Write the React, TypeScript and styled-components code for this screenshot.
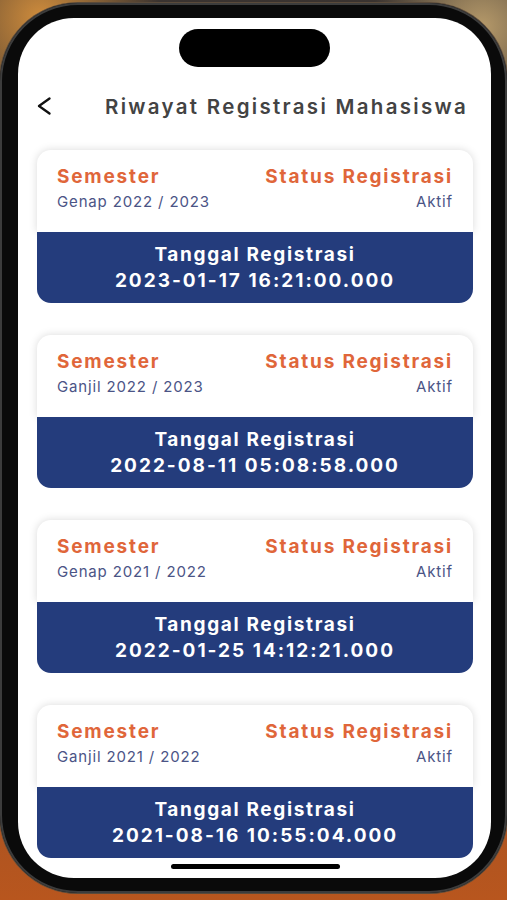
import React from "react";
import styled, { createGlobalStyle } from "styled-components";

const GlobalStyle = createGlobalStyle`
  html, body {
    margin: 0;
    padding: 0;
  }
  body {
    font-family: "Inter", "Noto Sans", sans-serif;
    background: #8a5a30;
  }
`;

interface IRegistration {
  semester: string;
  status: string;
  date: string;
}

const registrations: IRegistration[] = [
  { semester: "Genap 2022 / 2023", status: "Aktif", date: "2023-01-17 16:21:00.000" },
  { semester: "Ganjil 2022 / 2023", status: "Aktif", date: "2022-08-11 05:08:58.000" },
  { semester: "Genap 2021 / 2022", status: "Aktif", date: "2022-01-25 14:12:21.000" },
  { semester: "Ganjil 2021 / 2022", status: "Aktif", date: "2021-08-16 10:55:04.000" },
];

const Backdrop = styled.div`
  width: 507px;
  height: 900px;
  overflow: hidden;
  padding-top: 3px;
  box-sizing: border-box;
  background:
    radial-gradient(circle at 8% 2%, #cf8c3c 0, rgba(207, 140, 60, 0) 120px),
    radial-gradient(circle at 95% 3%, #b69a6a 0, rgba(182, 154, 106, 0) 110px),
    linear-gradient(to bottom, #3a3330 0%, #6b4a2e 40%, #9a5026 75%, #b8561e 100%);
  display: flex;
  justify-content: center;
`;

const Phone = styled.div`
  width: 507px;
  height: 890px;
  box-sizing: border-box;
  padding: 15px 16px 15px 18px;
  border-radius: 78px;
  background: #0a0a0a;
  box-shadow: inset 0 0 0 2px #3c3c3c, 0 0 0 1px #5a4a3a;
  display: flex;
`;

const Screen = styled.div`
  flex: 1;
  position: relative;
  overflow: hidden;
  background: #ffffff;
  border-radius: 56px;
  display: flex;
  flex-direction: column;
`;

const Island = styled.div`
  align-self: center;
  width: 151px;
  height: 38px;
  margin-top: 11px;
  border-radius: 19px;
  background: #000;
`;

const Header = styled.header`
  display: flex;
  align-items: center;
  height: 40px;
  margin-top: 19px;
  padding-left: 19px;
`;

const BackButton = styled.button`
  border: none;
  background: none;
  padding: 0;
  width: 14px;
  height: 18px;
  display: flex;
  cursor: pointer;
`;

const Title = styled.h1`
  margin: 0 0 0 54px;
  font-size: 20.5px;
  font-weight: 600;
  letter-spacing: 2.3px;
  color: #434343;
  white-space: nowrap;
`;

const List = styled.section`
  display: flex;
  flex-direction: column;
  gap: 32px;
  margin-top: 24px;
  padding: 0 18px 0 19px;
`;

const Card = styled.article`
  display: flex;
  flex-direction: column;
`;

const CardTop = styled.div`
  height: 82px;
  box-sizing: border-box;
  padding: 15px 20px 0 20px;
  background: #ffffff;
  border-radius: 14px 14px 0 0;
  box-shadow: 0 0 9px rgba(0, 0, 0, 0.15);
  display: flex;
  justify-content: space-between;
`;

const Column = styled.div<{ $align: "left" | "right" }>`
  display: flex;
  flex-direction: column;
  align-items: ${props => (props.$align === "right" ? "flex-end" : "flex-start")};
`;

const Label = styled.span`
  font-size: 19px;
  line-height: 24px;
  font-weight: 700;
  letter-spacing: 1.8px;
  color: #e0663a;
`;

const Value = styled.span`
  margin-top: 3px;
  font-size: 15px;
  line-height: 20px;
  letter-spacing: 0.85px;
  color: #4b5486;
`;

const CardBottom = styled.div`
  height: 71px;
  background: #243c7c;
  border-radius: 0 0 14px 14px;
  display: flex;
  flex-direction: column;
  align-items: center;
  justify-content: center;
  color: #ffffff;
  font-size: 19px;
  line-height: 26px;
  font-weight: 700;
`;

const BottomLine = styled.span<{ $spacing: number }>`
  letter-spacing: ${props => props.$spacing}px;
`;

const HomeIndicator = styled.div`
  position: absolute;
  left: 50%;
  bottom: 9px;
  width: 169px;
  height: 5px;
  margin-left: -84px;
  border-radius: 3px;
  background: #000;
`;

function RegistrationCard({ item }: { item: IRegistration }) {
  return (
    <Card>
      <CardTop>
        <Column $align="left">
          <Label>Semester</Label>
          <Value>{item.semester}</Value>
        </Column>
        <Column $align="right">
          <Label>Status Registrasi</Label>
          <Value>{item.status}</Value>
        </Column>
      </CardTop>
      <CardBottom>
        <BottomLine $spacing={1.65}>Tanggal Registrasi</BottomLine>
        <BottomLine $spacing={2}>{item.date}</BottomLine>
      </CardBottom>
    </Card>
  );
}

export default function App() {
  return (
    <>
      <GlobalStyle />
      <Backdrop>
        <Phone>
          <Screen>
            <Island />
            <Header>
              <BackButton aria-label="Kembali">
                <svg width="14" height="18" viewBox="0 0 14 18" fill="none">
                  <polyline
                    points="12.5,1.5 2,9 12.5,16.5"
                    stroke="#111"
                    strokeWidth="2.3"
                    strokeLinecap="round"
                    strokeLinejoin="round"
                  />
                </svg>
              </BackButton>
              <Title>Riwayat Registrasi Mahasiswa</Title>
            </Header>
            <List>
              {registrations.map(item => (
                <RegistrationCard key={item.date} item={item} />
              ))}
            </List>
            <HomeIndicator />
          </Screen>
        </Phone>
      </Backdrop>
    </>
  );
}
